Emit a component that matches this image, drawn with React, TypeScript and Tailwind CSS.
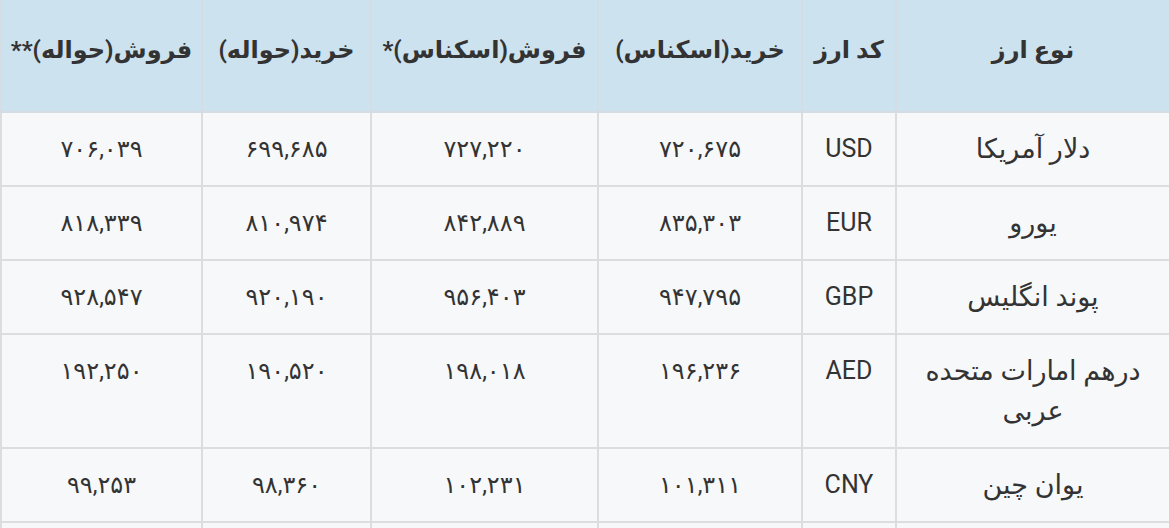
import React from "react";

const headers = [
	"نوع ارز",
	"کد ارز",
	"خرید(اسکناس)",
	"فروش(اسکناس)*",
	"خرید(حواله)",
	"فروش(حواله)**",
];

const widths = ["w-[274px]", "w-[94px]", "w-[204px]", "w-[227px]", "w-[169px]", "w-[201px]"];

const rows = [
	["دلار آمریکا", "USD", "۷۲۰,۶۷۵", "۷۲۷,۲۲۰", "۶۹۹,۶۸۵", "۷۰۶,۰۳۹"],
	["یورو", "EUR", "۸۳۵,۳۰۳", "۸۴۲,۸۸۹", "۸۱۰,۹۷۴", "۸۱۸,۳۳۹"],
	["پوند انگلیس", "GBP", "۹۴۷,۷۹۵", "۹۵۶,۴۰۳", "۹۲۰,۱۹۰", "۹۲۸,۵۴۷"],
	["درهم امارات متحده عربی", "AED", "۱۹۶,۲۳۶", "۱۹۸,۰۱۸", "۱۹۰,۵۲۰", "۱۹۲,۲۵۰"],
	["یوان چین", "CNY", "۱۰۱,۳۱۱", "۱۰۲,۲۳۱", "۹۸,۳۶۰", "۹۹,۲۵۳"],
	["", "", "", "", "", ""],
];

export default function App() {
	return (
		<div className="h-[528px] w-[1169px] overflow-hidden bg-[#f7f8f9]">
			<table
				dir="rtl"
				className="table-fixed border-collapse w-[1169px] text-[#333333] font-['Roboto','DejaVu_Sans',sans-serif]"
			>
				<thead>
					<tr className="bg-[#cce2ef]">
						{headers.map((h, i) => (
							<th
								key={h}
								className={`${widths[i]} h-[112px] align-top pt-[30px] px-2 text-[24px] leading-[40px] font-bold border-x-2 border-b-2 border-[#d6dde2] text-center`}
							>
								{h}
							</th>
						))}
					</tr>
				</thead>
				<tbody>
					{rows.map((r, ri) => (
						<tr key={ri} className="bg-[#f7f8f9]">
							{r.map((c, ci) => (
								<td
									key={ci}
									className={`align-top py-[16px] px-5 leading-[40px] text-center border-2 border-[#dddddd] ${
										ci === 0 ? "text-[27px]" : ci === 1 ? "text-[25px]" : "text-[24px]"
									}`}
								>
									{c || "\u00a0"}
								</td>
							))}
						</tr>
					))}
				</tbody>
			</table>
		</div>
	);
}
